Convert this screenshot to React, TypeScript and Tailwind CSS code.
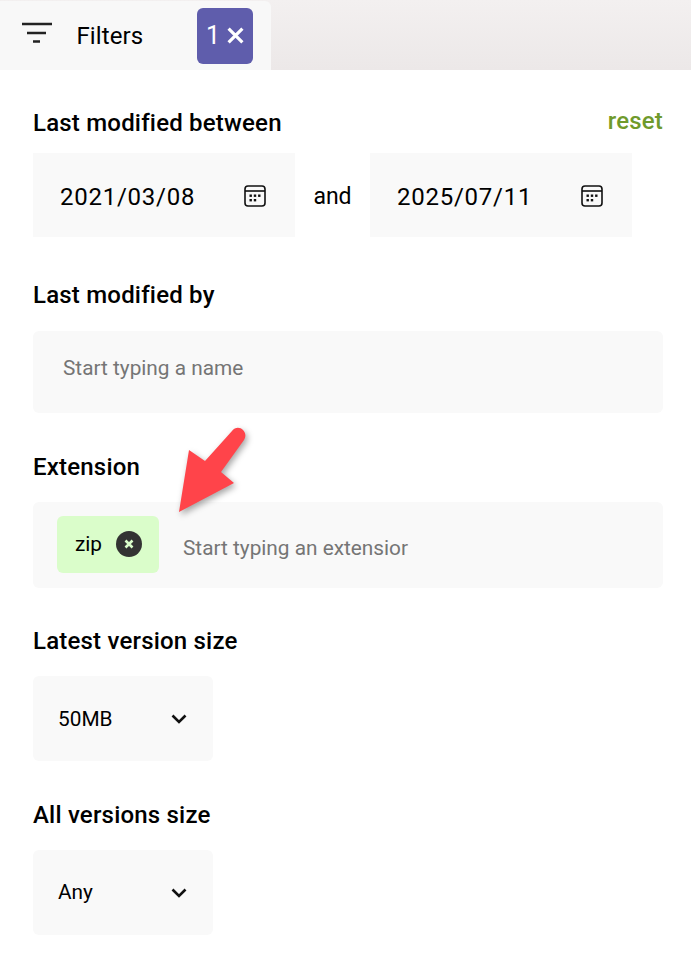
export function CalendarIcon() {
  return (
    <svg width="22" height="22" viewBox="0 0 22 22" fill="none" className="shrink-0 mt-[2px]">
      <rect x="1" y="1" width="20" height="20" rx="3" stroke="#111" strokeWidth="1.6" />
      <path d="M1 6h20" stroke="#111" strokeWidth="1.6" />
      <rect x="5.5" y="9.5" width="2.4" height="2.4" fill="#111" />
      <rect x="9.8" y="9.5" width="2.4" height="2.4" fill="#111" />
      <rect x="14.1" y="9.5" width="2.4" height="2.4" fill="#111" />
      <rect x="5.5" y="14" width="2.4" height="2.4" fill="#111" />
      <rect x="9.8" y="14" width="2.4" height="2.4" fill="#111" />
    </svg>
  );
}

export function Chevron() {
  return (
    <svg width="16" height="10" viewBox="0 0 16 10" fill="none">
      <path d="M1.5 1.5L8 8l6.5-6.5" stroke="#111" strokeWidth="2.6" />
    </svg>
  );
}

export function DateBox({ value }: { value: string }) {
  return (
    <div className="w-[262px] h-[84px] bg-[#f9f9f9] flex items-center justify-between pl-[27px] pr-[29px] text-[24px] tracking-[0.75px] text-black">
      <span className="pt-[4px]">{value}</span>
      <CalendarIcon />
    </div>
  );
}

export function SizeSelect({ value, offset }: { value: string; offset?: boolean }) {
  return (
    <div className="w-[180px] h-[85px] rounded-md bg-[#f9f9f9] flex items-center justify-between pl-[25px] pr-[26px] text-[20.8px] text-black">
      <span className={offset ? "pt-[3px]" : "pt-[1px]"}>{value}</span>
      <Chevron />
    </div>
  );
}

export default function App() {
  return (
    <div className="relative w-[691px] h-[964px] bg-white font-['Roboto',sans-serif] text-black overflow-hidden">
      {/* tab bar */}
      <div className="h-[70px] bg-gradient-to-b from-[#f3f0f0] to-[#ece8e8] pt-[1px]">
        <div className="w-[271px] h-[69px] rounded-tr-md bg-[#f8f8f8] flex items-center pl-[22px]">
          <svg width="30" height="22" viewBox="0 0 30 22" fill="none" className="shrink-0 -mt-[5px]">
            <path d="M0 2h30M5 11h19M11 19.5h7" stroke="#222" strokeWidth="2.4" />
          </svg>
          <span className="ml-[24.5px] text-[24px] tracking-[0.1px]">Filters</span>
          <div className="ml-auto mr-[18px] w-[56px] h-[56px] rounded-md bg-[#5f5dac] flex items-center justify-center gap-[7px] text-white text-[25px]">
            <span>1</span>
            <svg width="17" height="17" viewBox="0 0 16 16" fill="none">
              <path d="M1.5 1.5l13 13M14.5 1.5l-13 13" stroke="#fff" strokeWidth="3" />
            </svg>
          </div>
        </div>
      </div>

      <div className="pl-[33px] pr-[28px]">
        <div className="mt-[37px] flex items-start justify-between h-[29px]">
          <h2 className="text-[24px] tracking-[0.2px] leading-[32px] font-medium">Last modified between</h2>
          <button className="text-[#6f9a2c] text-[24px] tracking-[0.2px] leading-[28px] font-medium">reset</button>
        </div>
        <div className="mt-[17px] flex items-center">
          <DateBox value="2021/03/08" />
          <span className="w-[75px] pt-[4px] text-center text-[23px]">and</span>
          <DateBox value="2025/07/11" />
        </div>

        <h2 className="mt-[42px] pb-[2px] text-[24px] tracking-[0.2px] leading-[32px] font-medium">Last modified by</h2>
        <div className="mt-[18px] h-[82px] rounded-md bg-[#f9f9f9] flex items-center pl-[30px] pb-[6px] text-[20.8px] text-[#757575]">
          Start typing a name
        </div>

        <h2 className="mt-[38px] pb-[2px] text-[24px] tracking-[0.2px] leading-[32px] font-medium">Extension</h2>
        <div className="mt-[17px] h-[86px] rounded-md bg-[#f9f9f9] flex items-center pl-[24px]">
          <div className="w-[102px] h-[57px] mb-[2px] rounded-md bg-[#dafdca] flex items-center pl-[18px] gap-[14px] text-[20.8px]">
            <span className="pt-[1px]">zip</span>
            <span className="w-[26px] h-[26px] rounded-full bg-[#333333] flex items-center justify-center">
              <svg width="12" height="12" viewBox="0 0 12 12" fill="none">
                <path d="M2.5 2.5l7 7M9.5 2.5l-7 7" stroke="#dafdca" strokeWidth="2.6" />
              </svg>
            </span>
          </div>
          <span className="ml-[24px] pt-[7px] text-[20.8px] text-[#757575]">Start typing an extensior</span>
        </div>

        <h2 className="mt-[37px] pb-[2px] text-[24px] tracking-[0.2px] leading-[32px] font-medium">Latest version size</h2>
        <div className="mt-[17px]">
          <SizeSelect value="50MB" offset />
        </div>

        <h2 className="mt-[38px] pb-[2px] text-[24px] tracking-[0.2px] leading-[32px] font-medium">All versions size</h2>
        <div className="mt-[17px]">
          <SizeSelect value="Any" />
        </div>
      </div>

      {/* annotation arrow */}
      <svg
        width="90"
        height="110"
        viewBox="0 0 90 110"
        fill="none"
        className="absolute left-[170px] top-[420px] drop-shadow-[2px_3px_3px_rgba(0,0,0,0.35)]"
      >
        <path
          d="M9 92L19 30L35 41L62 11C65 7 70 7 73 10C76 13 76 17 74 20L51 52L64 63Z"
          fill="#ff444a"
        />
      </svg>
    </div>
  );
}
